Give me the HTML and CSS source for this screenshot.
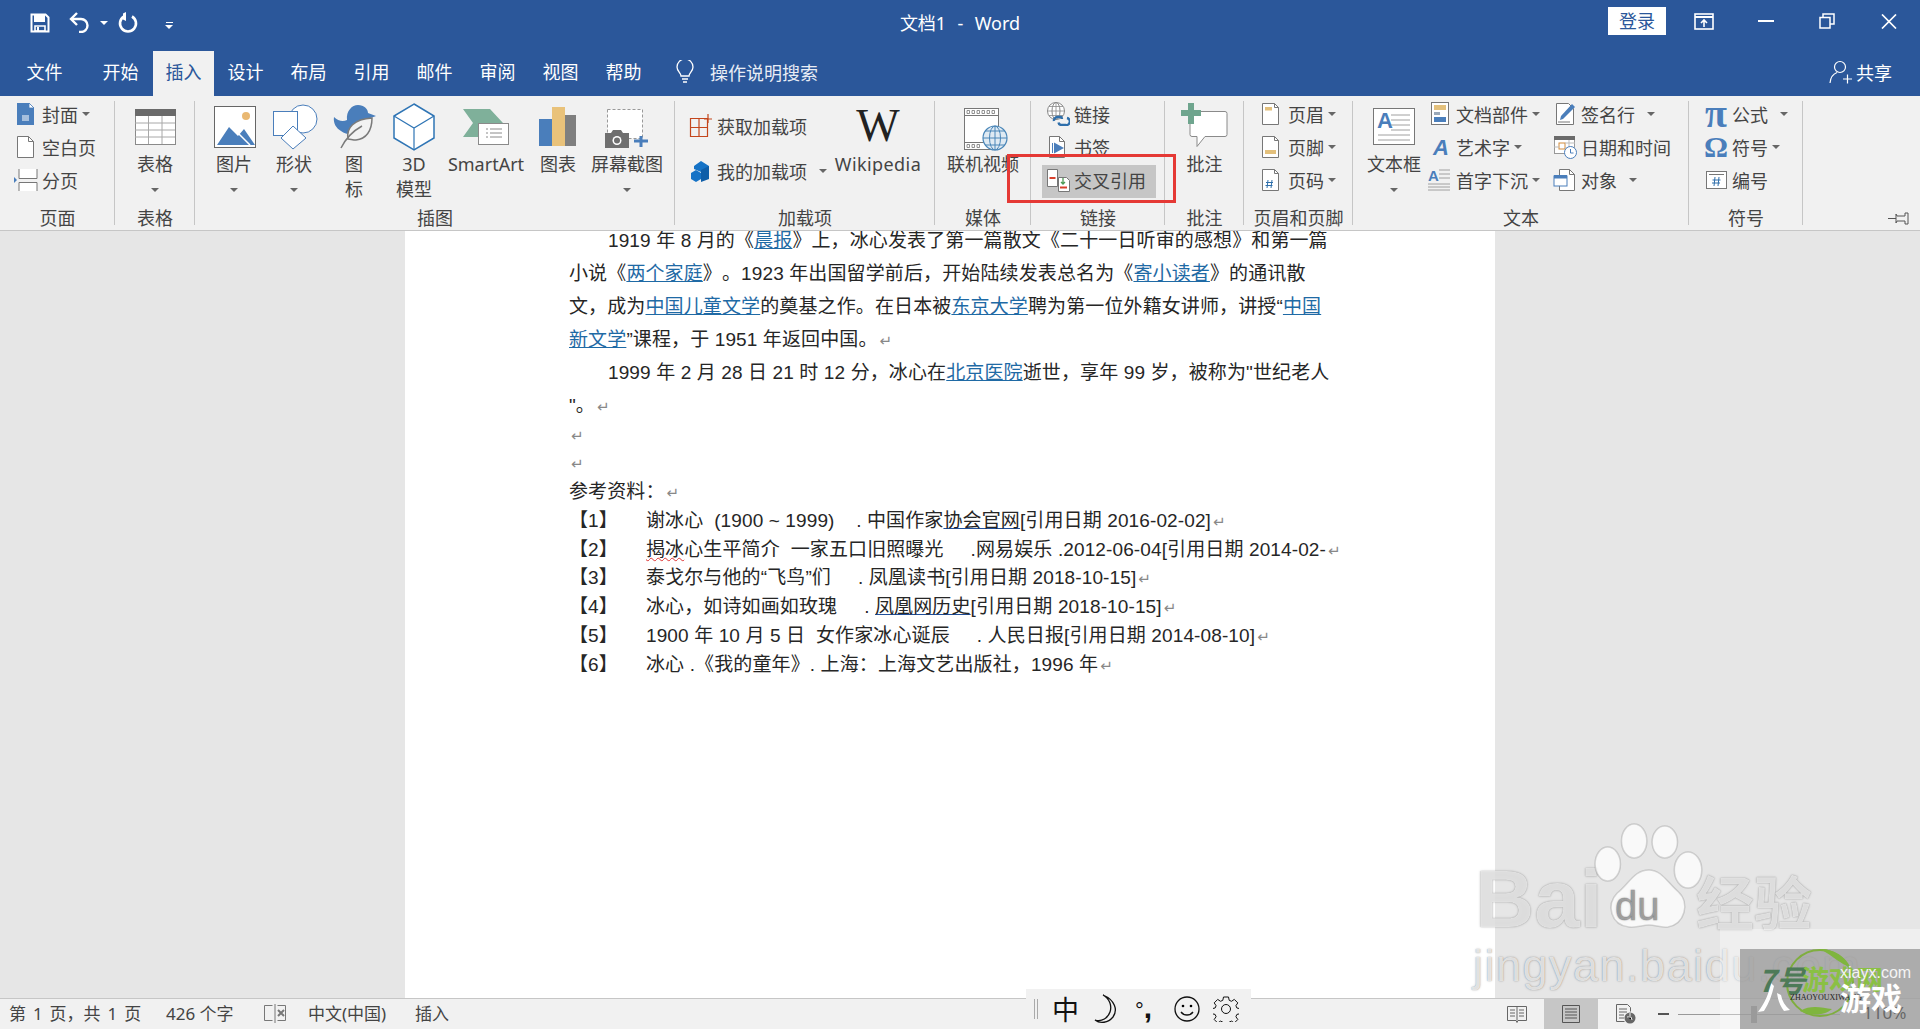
FILE: index.html
```html
<!DOCTYPE html>
<html lang="zh-CN">
<head>
<meta charset="utf-8">
<title>文档1 - Word</title>
<link rel="stylesheet" href="styles.css">
</head>
<body>
<div class="app">
  <header class="titlebar">
    <div class="qat">
      <svg class="qat-save" width="20" height="20" viewBox="0 0 20 20"><path d="M1.500 1.500h14l3 3v14h-17z" fill="none" stroke="#fff" stroke-width="2"/><rect x="4" y="2" width="11" height="7" fill="#fff"/><path d="M5 13h10v5H5z" fill="none" stroke="#fff" stroke-width="1.600"/><rect x="7" y="14" width="2" height="4" fill="#fff"/></svg>
      <svg class="qat-undo" width="21" height="21" viewBox="0 0 21 21"><path d="M8 1 2 7l6 6" fill="none" stroke="#fff" stroke-width="2.400"/><path d="M3 7h9a6.500 6.500 0 0 1 0 13h-2" fill="none" stroke="#fff" stroke-width="2.400"/></svg>
      <i class="caret caret-white"></i>
      <svg class="qat-redo" width="20" height="21" viewBox="0 0 20 21"><path d="M6 4.500a8 8 0 1 0 8 0" fill="none" stroke="#fff" stroke-width="2.600"/><path d="M8 0v9L5 7.500V1.500z" fill="#fff"/></svg>
      <span class="qat-more"><i class="qat-bar"></i><i class="caret caret-white"></i></span>
    </div>
    <div class="doc-title">文档1 &nbsp;-&nbsp; Word</div>
    <div class="win-controls">
      <button class="login">登录</button>
      <svg class="win-ribbon" width="20" height="17" viewBox="0 0 20 17"><rect x="1" y="1" width="18" height="15" fill="none" stroke="#fff" stroke-width="1.600"/><path d="M1 4h18" stroke="#fff" stroke-width="2"/><path d="M10 14V7M7 10l3-3 3 3" fill="none" stroke="#fff" stroke-width="1.600"/></svg>
      <svg class="win-min" width="16" height="2" viewBox="0 0 16 2"><rect width="16" height="2" fill="#fff"/></svg>
      <svg class="win-restore" width="16" height="16" viewBox="0 0 16 16"><path d="M1 4.500h10v10.500H1zM4 4V1h11v10h-3.500" fill="none" stroke="#fff" stroke-width="1.500"/></svg>
      <svg class="win-close" width="16" height="15" viewBox="0 0 16 15"><path d="M1 0.500 15 14.500M15 0.500 1 14.500" stroke="#fff" stroke-width="1.700"/></svg>
    </div>
  </header>

  <nav class="tabs">
    <a class="tab tab-file">文件</a>
    <a class="tab">开始</a>
    <a class="tab tab-active">插入</a>
    <a class="tab">设计</a>
    <a class="tab">布局</a>
    <a class="tab">引用</a>
    <a class="tab">邮件</a>
    <a class="tab">审阅</a>
    <a class="tab">视图</a>
    <a class="tab">帮助</a>
    <div class="tell-me">
      <svg width="20" height="24" viewBox="0 0 20 24"><path d="M6 16c0-3-4-4.500-4-9a8 8 0 0 1 16 0c0 4.500-4 6-4 9z" fill="none" stroke="#fff" stroke-width="1.300"/><path d="M7 19h6M8 22h4" stroke="#fff" stroke-width="1.600"/></svg>
      <span>操作说明搜索</span>
    </div>
    <div class="share">
      <svg width="24" height="24" viewBox="0 0 24 24"><circle cx="11" cy="7" r="5.500" fill="none" stroke="#fff" stroke-width="1.200"/><path d="M1 23c.5-6 3-9 7-10.500M14 19h9M18.500 14.500v9" fill="none" stroke="#fff" stroke-width="1.200"/></svg>
      <span>共享</span>
    </div>
  </nav>

  <section class="ribbon">
    <div class="group g-pages">
      <div class="group-body">
        <div class="stack">
          <div class="row"><svg class="ico" viewBox="0 0 24 24"><path d="M3 1h12l5 5v17H3z" fill="#4a7ebb"/><path d="M15 1v5h5z" fill="#fff" stroke="#4a7ebb" stroke-width=".8"/><path d="M8 14h7M8 16h7M8 18h7" stroke="#fff"/></svg><span>封面</span><i class="caret c4"></i></div>
          <div class="row"><svg class="ico" viewBox="0 0 24 24"><path d="M3.500 1.500h11l5 5v16h-16z" fill="#fff" stroke="#777"/><path d="M14.500 1.500v5h5" fill="none" stroke="#777"/></svg><span>空白页</span></div>
          <div class="row"><svg class="ico" viewBox="0 0 24 24"><path d="M5 1v9.500h18V1M5 23v-8.500h18V23" fill="#fff" stroke="#777"/><path d="M0 9l3 3-3 3z" fill="#4a7ebb"/></svg><span>分页</span></div>
        </div>
      </div>
      <div class="group-label">页面</div>
    </div>

    <div class="group g-table">
      <div class="group-body">
        <div class="big w80">
          <svg class="big-ico" viewBox="0 0 48 48"><rect x="4.500" y="7.500" width="40" height="35" fill="#fff" stroke="#8a8a8a"/><rect x="4" y="7" width="41" height="7" fill="#6a6a6a"/><path d="M4 21h40M4 28h40M4 35h40M17.500 14v28M31 14v28" stroke="#a8a8a8"/></svg>
          <span class="big-text">表格</span><span class="big-text"><i class="caret"></i></span>
        </div>
      </div>
      <div class="group-label">表格</div>
    </div>

    <div class="group g-illus">
      <div class="group-body">
        <div class="big w60">
          <svg class="big-ico" viewBox="0 0 48 48"><rect x="4.500" y="4.500" width="41" height="41" fill="#fff" stroke="#666"/><circle cx="36" cy="14" r="4" fill="#e9b872"/><path d="M7 43 19 25l9 9 6-7 11 16z" fill="#4a7ebb"/><path d="M25 28l15 15" stroke="#fff" stroke-width="1.500"/></svg>
          <span class="big-text">图片</span><span class="big-text"><i class="caret"></i></span>
        </div>
        <div class="big w60">
          <svg class="big-ico" viewBox="0 0 48 48"><circle cx="33" cy="17" r="14" fill="#fff" stroke="#4a7ebb"/><rect x="3.500" y="9.500" width="24" height="24" fill="#fff" stroke="#4a7ebb"/><path d="M23 24 36 36 23 47 11 36z" fill="#fff" stroke="#4a7ebb"/></svg>
          <span class="big-text">形状</span><span class="big-text"><i class="caret"></i></span>
        </div>
        <div class="big w60">
          <svg class="big-ico" viewBox="0 0 48 48"><path d="M4 15c4 4 9 5 13 3-1-9 5-15 11-15s10 4 10 8l8 3-8 3c0 6-3 10-8 13-6 4-14 3-19-1C6 26 3 21 4 15z" fill="#4a7ebb"/><path d="M18 37c-2-11 6-20 24-21 0 13-6 21-16 22-3 0-6-1-8-1z" fill="#f2f2f2" stroke="#7a7a7a" stroke-width="1.500"/><path d="M11 46c4-8 12-17 21-22" fill="none" stroke="#7a7a7a" stroke-width="1.500"/></svg>
          <span class="big-text">图</span><span class="big-text">标</span>
        </div>
        <div class="big w60">
          <svg class="big-ico" viewBox="0 0 48 48"><path d="M24 2 44 14v22L24 48 4 36V14z" fill="#fff" stroke="#2f75b5" stroke-width="1.500"/><path d="M4 14l20 12 20-12M24 26v22" fill="none" stroke="#2f75b5" stroke-width="1.200"/></svg>
          <span class="big-text">3D</span><span class="big-text">模型</span>
        </div>
        <div class="big w84">
          <svg class="big-ico" viewBox="0 0 48 48"><path d="M1 7h27l13 14-13 14H1l10-14z" fill="#7fb09a"/><rect x="16.500" y="21.500" width="30" height="21" fill="#fff" stroke="#8a8a8a"/><path d="M24 27h2M24 31h2M24 35h2M28 27h12M28 31h12M28 35h12" stroke="#8a8a8a"/></svg>
          <span class="big-text">SmartArt</span>
        </div>
        <div class="big w60">
          <svg class="big-ico" viewBox="0 0 48 48"><rect x="5" y="17" width="13" height="27" fill="#4a7ebb"/><rect x="18" y="5" width="13" height="39" fill="#e9c27a"/><rect x="31" y="13" width="11" height="31" fill="#7f7f7f"/></svg>
          <span class="big-text">图表</span>
        </div>
        <div class="big w78">
          <svg class="big-ico" viewBox="0 0 48 48"><rect x="4.500" y="7.500" width="35" height="29" fill="#fff" stroke="#999" stroke-dasharray="3 2"/><path d="M2 31h6l2-3h8l2 3h6v15H2z" fill="#6f6f6f"/><circle cx="14" cy="38.500" r="4.500" fill="#fff"/><circle cx="14" cy="38.500" r="3" fill="#6f6f6f"/><path d="M31 39h14M38 34v11" stroke="#4a7ebb" stroke-width="3"/></svg>
          <span class="big-text">屏幕截图</span><span class="big-text"><i class="caret"></i></span>
        </div>
      </div>
      <div class="group-label">插图</div>
    </div>

    <div class="group g-addins">
      <div class="group-body">
        <div class="stack stack-tall">
          <div class="row row-tall"><svg class="ico" viewBox="0 0 24 24"><path d="M1.500 4.500h17v18h-17zM1.500 13.500h17M10 4.500v18" fill="none" stroke="#c4461c" stroke-width="1.200"/><path d="M15 5h8M19 0v9" stroke="#c4461c" stroke-width="1.200" fill="none"/></svg><span>获取加载项</span></div>
          <div class="row row-tall"><svg class="ico" viewBox="0 0 24 24"><path d="M12 2l8 5v10l-8-4-7-3V7z" fill="#1673c6"/><path d="M12 11l8-4v13l-8 3z" fill="#0f5ea8"/><path d="M2 14l5-3 5 3v6l-5 3-5-3z" fill="#1673c6"/></svg><span>我的加载项</span><i class="caret c12"></i></div>
        </div>
        <div class="big w86">
          <span class="wiki-w">W</span>
          <span class="big-text wiki-text">Wikipedia</span>
        </div>
      </div>
      <div class="group-label">加载项</div>
    </div>

    <div class="group g-media">
      <div class="group-body">
        <div class="big w90">
          <svg class="big-ico" viewBox="0 0 48 48"><rect x="5.500" y="6.500" width="34" height="41" fill="#fff" stroke="#777"/><path d="M5 13.500h35M5 40.500h35" stroke="#777"/><path d="M8 8.500h2.500v3H8zM13 8.500h2.500v3H13zM18 8.500h2.500v3H18zM23 8.500h2.500v3H23zM28 8.500h2.500v3H28zM33 8.500h2.500v3H33zM8 42.500h2.500v3H8zM13 42.500h2.500v3H13zM18 42.500h2.500v3H18z" fill="none" stroke="#777" stroke-width=".8"/><circle cx="36" cy="36" r="12" fill="#dfeaf3" stroke="#4a86b8" stroke-width="1.200"/><ellipse cx="36" cy="36" rx="5.500" ry="12" fill="none" stroke="#4a86b8"/><path d="M24 36h24M26 29h20M26 43h20M36 24v24" stroke="#4a86b8"/></svg>
          <span class="big-text">联机视频</span>
        </div>
      </div>
      <div class="group-label">媒体</div>
    </div>

    <div class="group g-links">
      <div class="group-body">
        <div class="stack stack-links">
          <div class="row"><svg class="ico" viewBox="0 0 24 24"><circle cx="10" cy="9" r="8.500" fill="#fff" stroke="#8a8a8a"/><ellipse cx="10" cy="9" rx="4" ry="8.500" fill="none" stroke="#8a8a8a"/><path d="M1.500 9h17M3 4.500h14M3 13.500h14M10 .5v17" stroke="#8a8a8a" stroke-width=".8"/><path d="M8 19a3.500 3.500 0 0 1 3.500-4H15a3 3 0 0 1 1 2M21 16a3.500 3.500 0 0 1-1.500 7H15a3 3 0 0 1-2.500-2.500" fill="none" stroke="#2f6fab" stroke-width="2.400"/></svg><span>链接</span></div>
          <div class="row"><svg class="ico" viewBox="0 0 24 24"><path d="M3.500 1.500h10l5 5v16h-15z" fill="#fff" stroke="#777"/><path d="M13.500 1.500v5h5" fill="none" stroke="#777"/><path d="M8 7.500v11l10-5.500z" fill="#4a7ebb"/><path d="M6.500 8v10" stroke="#4a7ebb"/></svg><span>书签</span></div>
          <div class="row row-hl"><svg class="ico" viewBox="0 0 24 24"><path d="M1.500 1.500h10v17h-10z" fill="#fff" stroke="#777"/><path d="M3.500 10h6" stroke="#d9402c" stroke-width="2"/><path d="M12.500 9.500h8l3 3v11h-11z" fill="#fff" stroke="#777"/><path d="M17 10v6M15 14l2 2 2-2" fill="none" stroke="#4e9a54" stroke-width="1.300"/><path d="M14 19.500h7" stroke="#d9402c" stroke-width="2"/></svg><span>交叉引用</span></div>
        </div>
      </div>
      <div class="group-label">链接</div>
    </div>

    <div class="group g-comments">
      <div class="group-body">
        <div class="big w79">
          <svg class="big-ico" viewBox="0 0 48 48"><path d="M11 9.500h33a2 2 0 0 1 2 2v21a2 2 0 0 1-2 2H24l-8 10v-10h-5a2 2 0 0 1-2-2v-21a2 2 0 0 1 2-2z" fill="#fff" stroke="#8a8a8a"/><path d="M0 11h20M10 1v21" stroke="#6fa58e" stroke-width="6"/></svg>
          <span class="big-text">批注</span>
        </div>
      </div>
      <div class="group-label">批注</div>
    </div>

    <div class="group g-hf">
      <div class="group-body">
        <div class="stack">
          <div class="row"><svg class="ico" viewBox="0 0 24 24"><path d="M2.500 1.500h12l4 4v17h-16z" fill="#fff" stroke="#777"/><path d="M14.500 1.500v4h4" fill="none" stroke="#777"/><rect x="5" y="5" width="7" height="3.500" fill="#e3c07c"/></svg><span>页眉</span><i class="caret c4"></i></div>
          <div class="row"><svg class="ico" viewBox="0 0 24 24"><path d="M2.500 1.500h12l4 4v17h-16z" fill="#fff" stroke="#777"/><path d="M14.500 1.500v4h4" fill="none" stroke="#777"/><rect x="5" y="15" width="11" height="4" fill="#e3c07c"/></svg><span>页脚</span><i class="caret c4"></i></div>
          <div class="row"><svg class="ico" viewBox="0 0 24 24"><path d="M2.500 1.500h12l4 4v17h-16z" fill="#fff" stroke="#777"/><path d="M14.500 1.500v4h4" fill="none" stroke="#777"/><path d="M8 12l-1 8M12 12l-1 8M6 14.500h7M5.500 17.500h7" stroke="#2f6fab"/></svg><span>页码</span><i class="caret c4"></i></div>
        </div>
      </div>
      <div class="group-label">页眉和页脚</div>
    </div>

    <div class="group g-text">
      <div class="group-body">
        <div class="big w54">
          <svg class="big-ico" viewBox="0 0 48 48"><rect x="3.500" y="6.500" width="41" height="36" fill="#fff" stroke="#777"/><text x="7" y="26" class="svg-a">A</text><path d="M21 13h19M21 18h19M21 23h19M21 28h19M8 33h32M8 38h32" stroke="#a0a0a0"/></svg>
          <span class="big-text">文本框</span><span class="big-text"><i class="caret"></i></span>
        </div>
        <div class="stack stack-parts">
          <div class="row"><svg class="ico" viewBox="0 0 24 24"><rect x="3.500" y=".5" width="17" height="22" fill="#fff" stroke="#777"/><rect x="6" y="3" width="12" height="5" fill="#e3c07c"/><rect x="6" y="10" width="6" height="3" fill="#9aa8b8"/><rect x="6" y="15" width="12" height="5" fill="#4a7ebb"/></svg><span>文档部件</span><i class="caret c4"></i></div>
          <div class="row"><svg class="ico" viewBox="0 0 24 24"><text x="5" y="20" class="svg-art">A</text></svg><span>艺术字</span><i class="caret c4"></i></div>
          <div class="row"><svg class="ico" viewBox="0 0 24 24"><text x="0" y="13" class="svg-drop">A</text><path d="M11 2h11M11 6h11M11 10h11M0 16h22M0 19h22M0 22h22" stroke="#a0a0a0"/></svg><span>首字下沉</span><i class="caret c4"></i></div>
        </div>
        <div class="stack stack-sign">
          <div class="row"><svg class="ico" viewBox="0 0 24 24"><path d="M3.500 1.500h12l5 5v16h-17z" fill="#fff" stroke="#777"/><path d="M7 18l1-4L19 2l3 3L10 17z" fill="#4a7ebb"/><path d="M5 20h12" stroke="#777"/></svg><span>签名行</span><i class="caret c12"></i></div>
          <div class="row"><svg class="ico" viewBox="0 0 24 24"><rect x="1.500" y="1.500" width="20" height="17" fill="#fff" stroke="#999"/><rect x="1" y="1" width="21" height="4" fill="#6a6a6a"/><rect x="6" y="8" width="6" height="6" fill="#fff" stroke="#d18b3c"/><path d="M1 12h5M12 8h10M12 13h10M16 5v14" stroke="#bbb"/><circle cx="17.500" cy="17.500" r="6" fill="#fff" stroke="#4a7ebb"/><path d="M17.500 14v4h3" fill="none" stroke="#4a7ebb"/></svg><span>日期和时间</span></div>
          <div class="row"><svg class="ico" viewBox="0 0 24 24"><path d="M6.500 1.500h10l5 5v16h-15z" fill="#fff" stroke="#777"/><path d="M16.500 1.500v5h5" fill="none" stroke="#777"/><rect x="1" y="8" width="13" height="10" fill="#fff" stroke="#4a7ebb"/><rect x="1" y="7" width="13" height="3.500" fill="#4a7ebb"/></svg><span>对象</span><i class="caret c12"></i></div>
        </div>
      </div>
      <div class="group-label">文本</div>
    </div>

    <div class="group g-symbols">
      <div class="group-body">
        <div class="stack">
          <div class="row"><span class="sym-ico sym-pi">π</span><span>公式</span><i class="caret c12"></i></div>
          <div class="row"><span class="sym-ico">Ω</span><span>符号</span><i class="caret c4"></i></div>
          <div class="row"><svg class="ico" viewBox="0 0 24 24"><rect x="2.500" y="3.500" width="20" height="17" fill="#fff" stroke="#777"/><path d="M5 6.500h15" stroke="#777"/><path d="M11 9l-1 9M15 9l-1 9M8.500 12h8M8 15h8" stroke="#2f6fab"/></svg><span>编号</span></div>
        </div>
      </div>
      <div class="group-label">符号</div>
    </div>

    <div class="ribbon-end">
      <svg width="22" height="13" viewBox="0 0 22 13"><path d="M0 6.500h8M8 2l1 2h8V1h3v11h-3V9H9l-1 2z" fill="none" stroke="#555"/></svg>
    </div>
  </section>

  <main class="workspace">
    <article class="page">
      <div class="line line-a indent">1919 年 8 月的《<a>晨报</a>》上，冰心发表了第一篇散文《二十一日听审的感想》和第一篇</div>
      <div class="line line-a">小说《<a>两个家庭</a>》。1923 年出国留学前后，开始陆续发表总名为《<a>寄小读者</a>》的通讯散</div>
      <div class="line line-a">文，成为<a>中国儿童文学</a>的奠基之作。在日本被<a>东京大学</a>聘为第一位外籍女讲师，讲授“<a>中国</a></div>
      <div class="line line-a"><a>新文学</a>”课程，于 1951 年返回中国。<i class="ret">↵</i></div>
      <div class="line line-a indent">1999 年 2 月 28 日 21 时 12 分，冰心在<a>北京医院</a>逝世，享年 99 岁，被称为"世纪老人</div>
      <div class="line line-a">"。<i class="ret">↵</i></div>
      <div class="refs">
        <div class="line line-b"><i class="ret">↵</i></div>
        <div class="line line-b"><i class="ret">↵</i></div>
        <div class="line line-b">参考资料：<i class="ret">↵</i></div>
        <div class="line line-b"><span class="ref-no">【1】</span>谢冰心&nbsp; (1900 ~ 1999)&nbsp;&nbsp;&nbsp; . 中国作家<u class="lnk">协会官网</u>[引用日期 2016-02-02]<i class="ret">↵</i></div>
        <div class="line line-b"><span class="ref-no">【2】</span><u class="spell">揭冰</u>心生平简介 &nbsp;一家五口旧照曝光&nbsp;&nbsp;&nbsp;&nbsp; .网易娱乐 .2012-06-04[引用日期 2014-02-<i class="ret">↵</i></div>
        <div class="line line-b"><span class="ref-no">【3】</span>泰戈尔与他的“飞鸟”们&nbsp;&nbsp;&nbsp;&nbsp; . 凤凰读书[引用日期 2018-10-15]<i class="ret">↵</i></div>
        <div class="line line-b"><span class="ref-no">【4】</span>冰心，如诗如画如玫瑰&nbsp;&nbsp;&nbsp;&nbsp; . <u class="lnk">凤凰网历史</u>[引用日期 2018-10-15]<i class="ret">↵</i></div>
        <div class="line line-b"><span class="ref-no">【5】</span>1900 年 10 月 5 日 &nbsp;女作家冰心诞辰&nbsp;&nbsp;&nbsp;&nbsp; . 人民日报[引用日期 2014-08-10]<i class="ret">↵</i></div>
        <div class="line line-b"><span class="ref-no">【6】</span>冰心 .《我的童年》. 上海：上海文艺出版社，1996 年<i class="ret">↵</i></div>
      </div>
    </article>
  </main>

  <footer class="statusbar">
    <span class="st-page">第 1 页，共 1 页</span>
    <span class="st-words">426 个字</span>
    <svg class="st-proof" width="24" height="22" viewBox="0 0 24 22"><path d="M9.500 2.500H1.500v15h8M14.500 2.500h8v15h-8M12 1v19" fill="none" stroke="#777"/><path d="M15 7l6 6M21 7l-6 6" stroke="#777" stroke-width="2"/></svg>
    <span class="st-lang">中文(中国)</span>
    <span class="st-ins">插入</span>
    <div class="st-views">
      <svg class="st-read" width="20" height="18" viewBox="0 0 20 18"><path d="M.5 1.500h19v14H11l-1 2-1-2H.5zM10 1.500v14M3 5h5M3 8h5M3 11h5M12 5h5M12 8h5M12 11h5" fill="none" stroke="#666"/></svg>
      <span class="st-print"><svg width="18" height="18" viewBox="0 0 18 18"><path d="M.5.500h17v17H.5zM3 4h12M3 7h12M3 10h12M3 13h12" fill="none" stroke="#555"/></svg></span>
      <svg class="st-web" width="20" height="20" viewBox="0 0 20 20"><path d="M.5.500h11l3 3v4M.5.500v17h8M3 5h8M3 8h8M3 11h5M3 14h5" fill="none" stroke="#666"/><circle cx="14" cy="14" r="5.500" fill="#666"/><path d="M11 13h4l1 3M14 9v3" stroke="#f1f1f1"/></svg>
      <i class="st-minus"></i>
      <div class="st-slider"><i class="st-thumb"></i></div>
      <i class="st-zoom-space"></i>
    </div>
  </footer>

  <div class="redbox"></div>

  <div class="ime">
    <i class="ime-grip"></i>
    <span class="ime-zh">中</span>
    <svg width="26" height="30" viewBox="0 0 26 30"><path d="M11 1c7 4 9 11 7 17s-8 10-15 8c5 4 13 3 18-3 5-7 2-17-10-22z" fill="none" stroke="#111" stroke-width="1.300"/></svg>
    <span class="ime-punc">°<b>,</b></span>
    <svg width="26" height="28" viewBox="0 0 26 28"><circle cx="13" cy="14" r="12" fill="none" stroke="#111" stroke-width="1.300"/><circle cx="9" cy="11" r="1.300"/><circle cx="17" cy="11" r="1.300"/><path d="M7 17c3 4 9 4 12 0" fill="none" stroke="#111" stroke-width="1.300"/></svg>
    <svg width="26" height="26" viewBox="-13 -13 26 26"><circle r="4.500" fill="none" stroke="#111"/><path d="M-2.500-12h5l.7 3.300 2.300 1 2.800-1.900 3.500 3.500-1.900 2.800 1 2.300 3.300.7v5l-3.300.7-1 2.300 1.900 2.800-3.500 3.500-2.800-1.900-2.300 1-.7 3.300h-5l-.7-3.300-2.300-1-2.800 1.900-3.500-3.500 1.900-2.800-1-2.300-3.300-.7v-5l3.300-.7 1-2.300-1.900-2.800 3.500-3.500 2.800 1.900 2.300-1z" fill="none" stroke="#111"/></svg>
  </div>

  <div class="baidu">
    <span class="bd-bai">Bai</span>
    <svg class="bd-paw" width="112" height="112" viewBox="0 0 106 112" preserveAspectRatio="none"><g fill="rgba(255,255,255,.75)" stroke="rgba(0,0,0,.14)" stroke-width="1.500"><ellipse cx="38" cy="18" rx="12" ry="17"/><ellipse cx="67" cy="19" rx="12" ry="16"/><ellipse cx="13" cy="41" rx="12" ry="17"/><ellipse cx="89" cy="47" rx="13" ry="18"/><path d="M52 47c12 0 17 12 28 22 11 11 6 32-10 35-7 1-12-2-18-2s-11 3-19 2C16 102 11 82 22 70c11-9 16-23 30-23z"/></g></svg>
    <span class="bd-du">du</span>
    <span class="bd-jy">经验</span>
    <span class="bd-url">jingyan.baidu.com</span>
  </div>

  <div class="corner-light"></div>
  <div class="corner-dark">
    <span class="cd-zoom">110%</span>
    <svg class="cd-ring" width="76" height="76" viewBox="0 0 76 76"><circle cx="38" cy="38" r="33" fill="none" stroke="#7fae3e" stroke-width="2"/><path d="M38 4c14 0 26 8 30 18-10-3-15-10-30-18zM18 66c10 5 24 5 32-2-10-1-20-5-32 2z" fill="#7fb53e"/></svg>
    <svg class="cd-swoosh" width="34" height="30" viewBox="0 0 34 30"><path d="M14 0C12 10 8 20 1 29l6-1C12 20 15 12 17 3zM20 10l4 2c1 6 4 11 9 15l-6 1c-4-5-6-11-7-18z" fill="#fff"/></svg>
    <span class="cd-seven">7号</span>
    <span class="cd-net">游戏网</span>
    <span class="cd-domain">xiayx.com</span>
    <span class="cd-pin">ZHAOYOUXIWANG</span>
    <span class="cd-game">游戏</span>
  </div>
</div>
</body>
</html>
```

FILE: styles.css
```css
* { box-sizing: border-box; }
html, body { margin: 0; padding: 0; height: 100%; overflow: hidden; }
body {
  font-family: "Noto Sans", "Noto Sans CJK SC", sans-serif;
  font-size: 18px;
  color: #444;
}
.app { position: relative; width: 1920px; height: 1029px; display: flex; flex-direction: column; overflow: hidden; background: #e6e6e6; }

/* title bar */
.titlebar { height: 51px; flex: none; background: #2b579a; color: #fff; display: grid; grid-template-columns: 1fr auto 1fr; align-items: center; }
.qat { display: flex; align-items: center; padding: 0 0 6px 30px; }
.qat-undo { margin-left: 19px; }
.caret-white { border-top-color: #fff !important; margin-left: 10px; }
.qat-redo { margin-left: 10px; }
.qat-more { margin-left: 27px; display: flex; flex-direction: column; align-items: center; gap: 2px; padding-top: 6px; }
.qat-more .caret-white { margin-left: 0; }
.qat-bar { display: block; width: 7px; height: 1px; background: #fff; }
.doc-title { line-height: 40px; margin-bottom: 6px; font-size: 18px; word-spacing: 1px; }
.win-controls { display: flex; align-items: center; justify-content: flex-end; padding: 0 23px 9px 0; }
.login { width: 58px; height: 28px; background: #fff; color: #2b579a; border: 0; padding: 0; font: inherit; font-size: 18px; line-height: 28px; }
.win-ribbon { margin-left: 28px; }
.win-min { margin-left: 44px; }
.win-restore { margin-left: 45px; }
.win-close { margin-left: 46px; }

/* tabs */
.tabs { height: 45px; flex: none; background: #2b579a; color: #fff; display: flex; align-items: stretch; }
.tab { width: 63px; line-height: 42px; text-align: center; font-size: 18px; }
.tab-file { width: 89px; }
.tab-active { width: 61px; margin-left: 1px; background: #f1f1f1; color: #2b579a; }
.tell-me { display: flex; align-items: center; margin-left: 20px; gap: 15px; padding-bottom: 4px; }
.tell-me svg { margin-top: 1px; }
.tell-me span { color: #e8edf5; }
.share { display: flex; align-items: center; gap: 3px; margin-left: auto; padding: 0 28px 4px 0; }

/* ribbon */
.ribbon { height: 135px; flex: none; background: #f1f1f1; border-bottom: 1px solid #c6c6c6; display: flex; }
.group { position: relative; flex: none; display: flex; flex-direction: column; padding-top: 3px; }
.group::after { content: ""; position: absolute; top: 5px; bottom: 5px; right: 0; width: 1px; background: #c6c6c6; }
.group-body { height: 107px; display: flex; flex: none; }
.group-label { height: 24px; line-height: 24px; text-align: center; font-size: 18px; color: #444; white-space: nowrap; }
.g-pages { width: 115px; }
.g-table { width: 80px; }
.g-illus { width: 480px; }
.g-illus .group-body { padding-left: 9px; }
.g-addins { width: 260px; }
.g-media { width: 96px; }
.g-links { width: 134px; }
.g-comments { width: 79px; }
.g-hf { width: 109px; }
.g-text { width: 336px; }
.g-symbols { width: 114px; }
.ribbon-end { flex: 1; display: flex; align-items: flex-end; justify-content: flex-end; padding: 0 10px 5px 0; }

.stack { display: flex; flex-direction: column; padding-left: 14px; }
.g-hf .stack { padding-left: 16px; }
.g-symbols .stack { padding-left: 15px; }
.row { height: 33px; display: flex; align-items: center; gap: 4px; padding-bottom: 3px; white-space: nowrap; }
.ico { width: 24px; height: 24px; flex: none; }
.stack-tall { padding-top: 6px; width: 160px; }
.row-tall { height: 45px; }
.stack-links { padding-left: 11px; }
.stack-links .row { width: 114px; padding-left: 4px; }
.row-hl { background: #c6c6c6; }
.stack-parts { padding-left: 7px; width: 129px; }
.stack-sign { padding-left: 3px; }

.big { display: flex; flex-direction: column; align-items: center; flex: none; }
.big-ico { width: 48px; height: 48px; margin: 3px 0 2px; overflow: visible; flex: none; }
.big-text { height: 25px; line-height: 25px; white-space: nowrap; display: flex; align-items: center; justify-content: center; }
.wiki-text { letter-spacing: .4px; }
.w54 { width: 54px; margin-left: 14px; }
.w60 { width: 60px; }
.w78 { width: 78px; }
.w79 { width: 79px; }
.w80 { width: 80px; }
.w84 { width: 84px; }
.w86 { width: 86px; }
.w90 { width: 96px; }
.wiki-w { height: 53px; line-height: 53px; font-family: "Liberation Serif", serif; font-size: 46px; color: #222; }

.caret { display: inline-block; width: 0; height: 0; border-left: 4px solid transparent; border-right: 4px solid transparent; border-top: 4px solid #666; flex: none; }
.c4 { margin-left: 0; }
.c12 { margin-left: 8px; }
.sym-ico { width: 24px; text-align: center; font-family: "Liberation Serif", serif; font-size: 30px; font-weight: 700; color: #4a7ebb; line-height: 24px; }
.sym-pi { font-size: 40px; }
.svg-a { font-family: "Liberation Sans", sans-serif; font-size: 22px; font-weight: 700; fill: #4a7ebb; }
.svg-art { font-family: "Liberation Sans", sans-serif; font-size: 22px; font-weight: 700; font-style: italic; fill: #4a7ebb; }
.svg-drop { font-family: "Liberation Sans", sans-serif; font-size: 15px; font-weight: 700; fill: #4a7ebb; }

/* workspace */
.workspace { flex: 1; min-height: 0; display: flex; justify-content: center; overflow: hidden; padding-right: 20px; }
.page { width: 1090px; background: #fff; padding-left: 164px; color: #262626; font-family: "Liberation Sans", "Noto Sans CJK SC", sans-serif; font-size: 19px; letter-spacing: .12px; text-spacing-trim: space-all; }
.line { white-space: nowrap; }
.line-a { height: 33px; line-height: 33px; }
.line-a:first-child { margin-top: -7px; }
.line-b { height: 28.8px; line-height: 28.8px; }
.indent { padding-left: 39px; }
.refs { margin-top: -1.5px; }
.page a { color: #1f6aa5; text-decoration: underline; }
.ret { font-style: normal; font-family: "DejaVu Sans", sans-serif; font-size: 15px; color: #888; margin-left: 2px; }
.ref-no { display: inline-block; width: 77px; }
.lnk { text-decoration-color: #1f4e9a; }
.spell { text-decoration: underline wavy #d33; text-decoration-thickness: 1px; }

/* status bar */
.statusbar { height: 31px; flex: none; background: #f1f1f1; border-top: 1px solid #c6c6c6; display: flex; align-items: center; font-size: 17px; color: #444; }
.statusbar > span { margin-top: -4px; }
.st-page { margin-left: 9px; width: 157px; word-spacing: 2.5px; }
.st-words { width: 97px; }
.st-proof { margin-right: 21px; }
.st-lang { width: 107px; }
.st-views { margin-left: auto; display: flex; align-items: center; height: 100%; }
.st-read { margin-right: 17px; }
.st-print { width: 54px; height: 100%; background: #c6c6c6; display: flex; align-items: center; justify-content: center; }
.st-web { margin-left: 18px; }
.st-minus { width: 11px; height: 2px; background: #555; margin-left: 22px; }
.st-slider { position: relative; width: 162px; height: 1px; background: #999; margin-left: 9px; }
.st-thumb { position: absolute; left: 73px; top: -8px; width: 6px; height: 17px; background: #888; }
.st-zoom-space { width: 80px; }

/* overlays */
.redbox { position: absolute; left: 1007px; top: 154px; width: 169px; height: 49px; border: 3px solid #e53935; }
.ime { position: absolute; left: 1026px; top: 989px; width: 225px; height: 40px; background: #f1f1f1; display: flex; align-items: center; padding-left: 8px; gap: 13px; color: #111; }
.ime-grip { width: 4px; height: 20px; border-left: 1px solid #aaa; border-right: 1px solid #aaa; margin-right: 1px; }
.ime-zh { font-family: "Noto Sans CJK SC", sans-serif; font-size: 27px; line-height: 30px; }
.ime-punc { font-family: "Liberation Sans", sans-serif; font-size: 22px; width: 26px; margin-left: 4px; line-height: 20px; }
.ime-punc b { font-size: 30px; }

.baidu { position: absolute; left: 1470px; top: 820px; width: 350px; height: 175px; color: rgba(255,255,255,.75); pointer-events: none; }
.baidu span { position: absolute; white-space: nowrap; text-shadow: 0 0 1px rgba(0,0,0,.4), 0 0 3px rgba(0,0,0,.14); }
.bd-bai { left: 5px; top: 33px; font: 700 82px/92px "Liberation Sans", sans-serif; letter-spacing: 0; }
.bd-paw { position: absolute; left: 124px; top: 3px; }
.bd-du { left: 145px; top: 64px; font: 400 40px/44px "Liberation Sans", sans-serif; color: rgba(255,255,255,.2); -webkit-text-stroke: 1px rgba(0,0,0,.16); }
.bd-jy { left: 226px; top: 42px; font: 700 58px/76px "Noto Sans CJK SC", sans-serif; }
.bd-url { left: 3px; top: 120px; font: 400 45px/52px "Liberation Sans", sans-serif; letter-spacing: 1.500px; }

.corner-light { position: absolute; left: 1720px; top: 929px; width: 200px; height: 100px; background: rgba(255,255,255,.35); }
.corner-dark { position: absolute; left: 1740px; top: 949px; width: 180px; height: 80px; background: rgba(144,144,144,.7); overflow: hidden; }
.corner-dark span { position: absolute; white-space: nowrap; }
.cd-ring { position: absolute; left: 42px; top: -4px; }
.cd-swoosh { position: absolute; left: 17px; top: 34px; }
.cd-zoom { left: 123px; top: 51px; font-size: 17px; line-height: 26px; color: #666; }
.cd-seven { left: 18px; top: 12px; font: italic 700 30px/36px "Noto Sans CJK SC", sans-serif; color: #4d7a58; }
.cd-net { left: 62px; top: 12px; font: 700 27px/36px "Noto Sans CJK SC", sans-serif; color: #8ac044; }
.cd-domain { left: 100px; top: 14px; font: 400 16px/20px "Liberation Sans", sans-serif; color: #f4f4f4; }
.cd-pin { left: 50px; top: 44px; font: 400 8px/10px "Liberation Serif", serif; color: #222; }
.cd-game { left: 100px; top: 28px; font: 700 31px/40px "Noto Sans CJK SC", sans-serif; color: #fff; }
```
